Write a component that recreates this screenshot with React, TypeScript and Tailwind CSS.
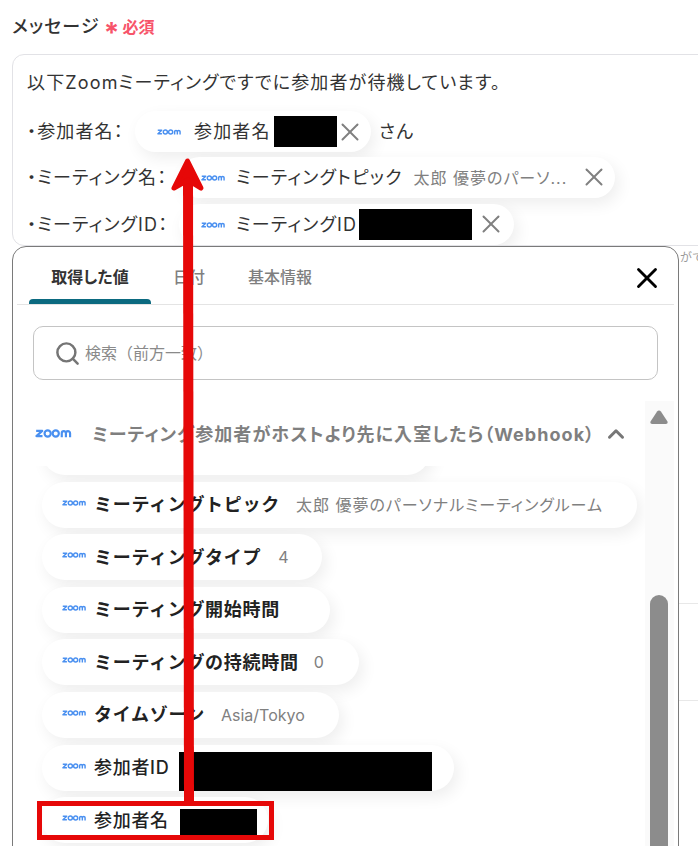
import { Search, X, ChevronUp } from 'lucide-react';

const pillShadow = 'shadow-[4px_6px_16px_rgba(0,0,0,0.07)]';
const jpText = "[font-feature-settings:'palt'] tracking-[1.15px]";

function ZoomLogo({ className }: { className: string }) {
  return (
    <svg viewBox="0 0 66 18" className={className} fill="none" stroke="#4a90f0" strokeWidth="3.8">
      <path d="M2 4.5h10.5L2.5 13.5H13" strokeLinejoin="round" />
      <circle cx="22" cy="9" r="5.4" />
      <circle cx="36" cy="9" r="5.4" />
      <path d="M46.5 15.5V8.4a3.6 3.6 0 0 1 7.2 0V15.5M53.7 8.4a3.6 3.6 0 0 1 7.2 0V15.5" />
    </svg>
  );
}

function Redacted({ w, h }: { w: string; h: string }) {
  return <span className={`block bg-black shrink-0 ${w} ${h}`} />;
}

function MessageChip({ className, children }: { className: string; children: React.ReactNode }) {
  return (
    <span className={`inline-flex items-center h-[41px] rounded-full bg-white ${pillShadow} ${className}`}>
      {children}
    </span>
  );
}

function OutputPill({ title, width, bold = true, children }: { title: string; width: string; bold?: boolean; children?: React.ReactNode }) {
  return (
    <div className={`flex items-center h-[46px] rounded-full bg-white pl-5 shrink-0 ${pillShadow} ${width}`}>
      <ZoomLogo className="w-[25px] h-[8px] shrink-0 -mt-[4px]" />
      <span className={`ml-[7px] text-[18px] tracking-[0.7px] text-[#222] whitespace-nowrap ${bold ? 'font-bold' : 'font-medium'}`}>{title}</span>
      {children}
    </div>
  );
}

export default function App() {
  return (
    <div className="relative h-[846px] w-[698px] overflow-hidden bg-white text-[18px] text-[#333] font-['Inter','Noto_Sans_CJK_JP',sans-serif]">
      {/* field label */}
      <div className="flex items-start pl-3 pt-[15px] h-[54px]">
        <span className={`text-[18px] leading-6 font-medium text-[#333] ${jpText}`}>メッセージ</span>
        <span className="ml-[4px] text-[#f7546a] text-[28px] leading-6 font-bold mt-[6px]">*</span>
        <span className="ml-[3px] text-[#f7546a] text-[16px] leading-6 font-bold">必須</span>
      </div>

      {/* message box */}
      <div className="ml-3 w-[720px] h-[192px] border border-[#e2e2e6] rounded-xl pl-[14px] pt-[16px] overflow-hidden">
        <div className={`leading-6 whitespace-nowrap ${jpText}`}>以下Zoomミーティングですでに参加者が待機しています。</div>
        <div className="flex items-center mt-[16px] h-[41px]">
          <span className={`w-[108px] whitespace-nowrap ${jpText}`}>・参加者名：</span>
          <MessageChip className="w-[236px] pl-[22px] shrink-0">
            <ZoomLogo className="w-[25px] h-[8px] shrink-0" />
            <span className={`ml-[12px] whitespace-nowrap ${jpText}`}>参加者名</span>
            <Redacted w="w-[63px]" h="h-[31px] ml-[3px]" />
            <X className="-ml-[2px] w-[30px] h-[30px] shrink-0 text-[#808080]" strokeWidth={1.6} />
          </MessageChip>
          <span className={`ml-2 ${jpText}`}>さん</span>
        </div>
        <div className="flex items-center mt-[5px] h-[41px]">
          <span className={`w-[152px] whitespace-nowrap ${jpText}`}>・ミーティング名：</span>
          <MessageChip className="w-[436px] pl-[22px] shrink-0 relative">
            <ZoomLogo className="w-[25px] h-[8px] shrink-0" />
            <span className={`ml-[10px] whitespace-nowrap ${jpText}`}>ミーティングトピック</span>
            <span className={`ml-[11px] text-[16px] tracking-[1px] text-[#808080] whitespace-nowrap [font-feature-settings:'palt']`}>太郎 優夢のパーソ...</span>
            <X className="absolute right-[6px] top-[5px] w-[30px] h-[30px] text-[#808080]" strokeWidth={1.6} />
          </MessageChip>
        </div>
        <div className="flex items-center mt-[6px] h-[41px]">
          <span className={`w-[152px] whitespace-nowrap ${jpText}`}>・ミーティングID：</span>
          <MessageChip className="w-[335px] pl-[22px] shrink-0 relative">
            <ZoomLogo className="w-[25px] h-[8px] shrink-0" />
            <span className={`ml-[10px] whitespace-nowrap ${jpText}`}>ミーティングID</span>
            <Redacted w="w-[113px]" h="h-[31px] ml-[2px]" />
            <X className="absolute right-[8px] top-[5px] w-[30px] h-[30px] text-[#808080]" strokeWidth={1.6} />
          </MessageChip>
        </div>
      </div>

      {/* bits of the form behind the popup */}
      <div className="absolute left-[680px] top-[250px] text-[12px] leading-4 text-[#999] whitespace-nowrap">がで</div>
      <div className="absolute left-[679px] top-[603px] w-[19px] h-px bg-[#e8e8e8]" />
      <div className="absolute left-[679px] top-[700px] w-[19px] h-px bg-[#e8e8e8]" />

      {/* value picker popup */}
      <div className="absolute isolate left-3 top-[246px] w-[667px] h-[640px] bg-white border border-[#7a7a7a] rounded-t-[14px] flex flex-col overflow-hidden">
        <div className="relative flex items-center shrink-0 h-[58px] mx-1 border-b border-[#e4e4e4] pl-3 pt-[3px] text-[16px] font-medium text-[#7f7f7f] [font-feature-settings:'palt']">
          <div className="relative flex items-center justify-center w-[122px] h-full font-bold text-[#333]">
            取得した値
            <span className="absolute left-0 right-0 bottom-0 h-[5px] rounded-t-[4px] bg-[#0b6a80]" />
          </div>
          <div className="ml-[22px]">日付</div>
          <div className="ml-[43px]">基本情報</div>
          <X className="absolute right-[10px] top-[14px] w-[34px] h-[34px] text-black" strokeWidth={2} />
        </div>

        <div className="shrink-0 mt-[21px] ml-5 w-[625px] h-[54px] border border-[#c4c4c4] rounded-[10px] flex items-center pl-[20px] text-[16px] text-[#8a8a8a]">
          <Search className="w-[27px] h-[27px] text-[#757575]" strokeWidth={2.2} />
          <span className="ml-[4px]">検索（前方一致）</span>
        </div>

        <div className="flex flex-1 min-h-0 mt-[21px] mr-1">
          <div className="flex-1 min-w-0 overflow-hidden">
            <div className="relative z-10 flex items-center h-[65px] pl-[22px] bg-white">
              <ZoomLogo className="w-[38px] h-[11px] shrink-0" />
              <span className="ml-[19px] w-[511px] text-[18px] font-bold text-[#7f7f7f] whitespace-nowrap mt-[1px] tracking-[1.05px] [font-feature-settings:'palt']">ミーティング参加者がホストより先に入室したら（Webhook）</span>
              <ChevronUp className="w-[26px] h-[26px] text-[#777]" strokeWidth={2.8} />
            </div>
            <div className="flex flex-col gap-[6.6px] pl-[29px] pt-[9px] -mt-[46px]">
              <div className={`h-[46px] w-[388px] rounded-full bg-white shrink-0 ${pillShadow}`} />
              <OutputPill title="ミーティングトピック" width="w-[595px]">
                <span className="ml-4 text-[16px] tracking-[1px] text-[#808080] whitespace-nowrap [font-feature-settings:'palt']">太郎 優夢のパーソナルミーティングルーム</span>
              </OutputPill>
              <OutputPill title="ミーティングタイプ" width="w-[280px]">
                <span className="ml-[17px] text-[16px] text-[#808080]">4</span>
              </OutputPill>
              <OutputPill title="ミーティング開始時間" width="w-[288px]" />
              <OutputPill title="ミーティングの持続時間" width="w-[317px]">
                <span className="ml-[15px] text-[16px] text-[#808080]">0</span>
              </OutputPill>
              <OutputPill title="タイムゾーン" width="w-[297px]">
                <span className="ml-[16px] text-[16px] text-[#808080]">Asia/Tokyo</span>
              </OutputPill>
              <OutputPill title="参加者ID" width="w-[412px]" bold={false}>
                <Redacted w="w-[253px]" h="h-[39px] ml-[10px] mt-[8px]" />
              </OutputPill>
              <OutputPill title="参加者名" width="w-[226px]" bold={false}>
                <Redacted w="w-[77px]" h="h-[27px] ml-[11px] mt-[4px]" />
              </OutputPill>
            </div>
          </div>

          {/* scrollbar */}
          <div className="w-[29px] shrink-0 bg-[#fafafa] flex flex-col items-center pt-[9px] pr-[6px] pl-[5px]">
            <svg viewBox="0 0 18 14" className="w-[18px] h-[14px] shrink-0 fill-[#8c8c8c]">
              <path d="M9 0.5c.8 0 1.4.4 1.9 1.1l6.4 9.6c.8 1.3.2 2.8-1.4 2.8H2.1C.5 14-.1 12.5.7 11.2l6.4-9.6C7.6.9 8.2.5 9 .5z" />
            </svg>
            <div className="mt-[171px] w-[18px] h-[300px] shrink-0 rounded-t-[9px] bg-[#8c8c8c]" />
          </div>
        </div>
      </div>

      {/* red annotations */}
      <div className="absolute left-[37px] top-[801px] w-[237px] h-[39px] border-[5px] border-[#e60808]" />
      <svg className="absolute left-0 top-0 w-[698px] h-[846px] pointer-events-none" viewBox="0 0 698 846" fill="none">
        <path d="M189 802 L188 175" stroke="#e60808" strokeWidth="10" />
        <path d="M187.5 161 L174 188 L188 180 L201 188 Z" fill="#e60808" stroke="#e60808" strokeWidth="5" strokeLinejoin="round" />
      </svg>
    </div>
  );
}
